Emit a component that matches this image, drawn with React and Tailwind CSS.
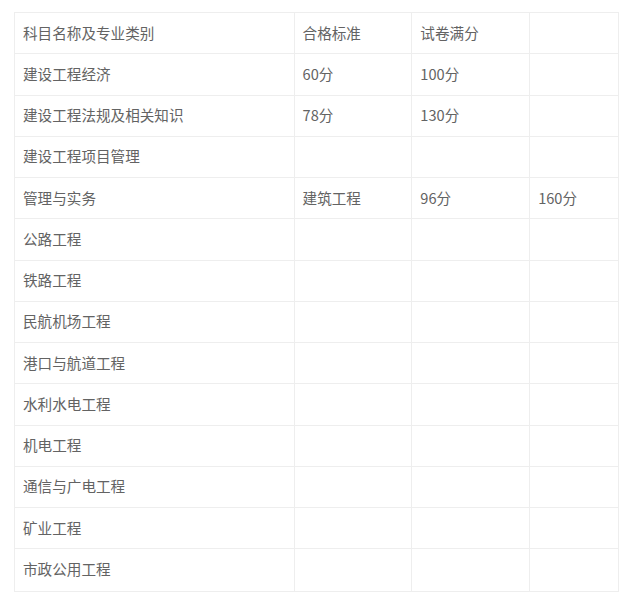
import React from "react";

const rows = [
  ["科目名称及专业类别", "合格标准", "试卷满分", ""],
  ["建设工程经济", "60分", "100分", ""],
  ["建设工程法规及相关知识", "78分", "130分", ""],
  ["建设工程项目管理", "", "", ""],
  ["管理与实务", "建筑工程", "96分", "160分"],
  ["公路工程", "", "", ""],
  ["铁路工程", "", "", ""],
  ["民航机场工程", "", "", ""],
  ["港口与航道工程", "", "", ""],
  ["水利水电工程", "", "", ""],
  ["机电工程", "", "", ""],
  ["通信与广电工程", "", "", ""],
  ["矿业工程", "", "", ""],
  ["市政公用工程", "", "", ""],
];

const widths = ["w-[280px]", "w-[118px]", "w-[118px]", "w-[88px]"];

export default function App() {
  return (
    <div
      className="min-h-[607px] bg-white pt-[12px] pl-[14px]"
      style={{ fontFamily: '"Noto Sans CJK SC", "Noto Sans", sans-serif' }}
    >
      <div className="w-[605px] border border-[#eeeeee] text-[14.6px] text-[#636363]">
        {rows.map((r, i) => (
          <div
            key={i}
            className={`flex h-[41.25px] ${i < rows.length - 1 ? "border-b border-[#eeeeee]" : ""}`}
          >
            {r.map((c, j) => (
              <div
                key={j}
                className={`${widths[j]} flex items-center pl-[8px] pb-[1px] ${j < 3 ? "border-r border-[#eeeeee]" : ""}`}
              >
                {c}
              </div>
            ))}
          </div>
        ))}
      </div>
    </div>
  );
}
